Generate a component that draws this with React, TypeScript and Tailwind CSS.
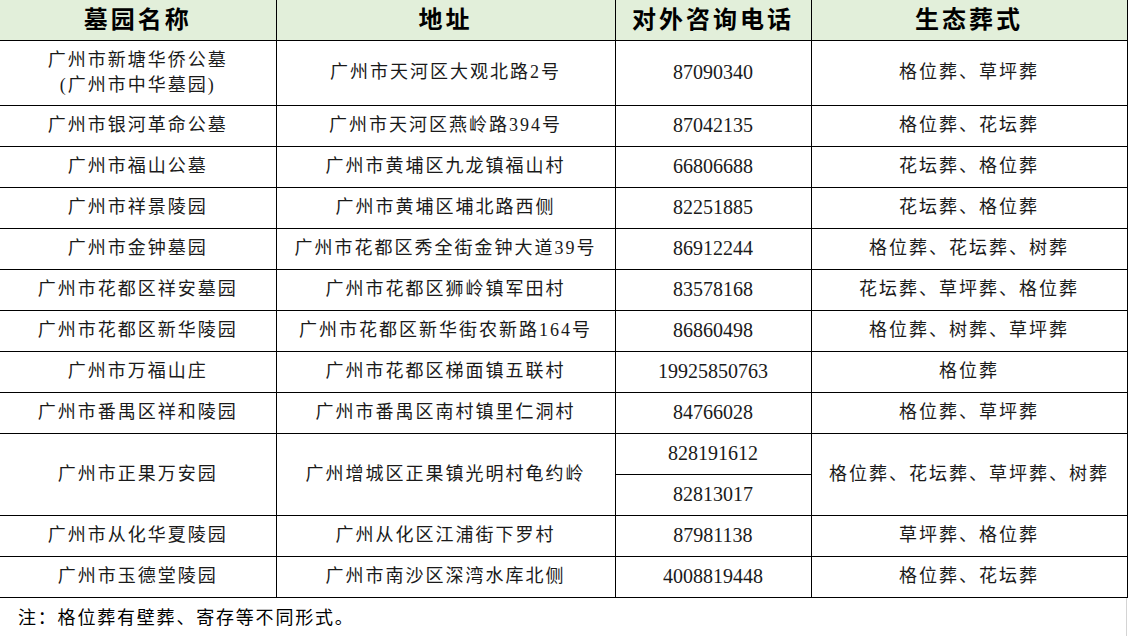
import React from "react";

type Row = { name: string[]; addr: string; phone: string; type: string; h: string };

const rows: Row[] = [
  { name: ["广州市新塘华侨公墓", "(广州市中华墓园)"], addr: "广州市天河区大观北路2号", phone: "87090340", type: "格位葬、草坪葬", h: "h-[65px]" },
  { name: ["广州市银河革命公墓"], addr: "广州市天河区燕岭路394号", phone: "87042135", type: "格位葬、花坛葬", h: "h-[41px]" },
  { name: ["广州市福山公墓"], addr: "广州市黄埔区九龙镇福山村", phone: "66806688", type: "花坛葬、格位葬", h: "h-[41px]" },
  { name: ["广州市祥景陵园"], addr: "广州市黄埔区埔北路西侧", phone: "82251885", type: "花坛葬、格位葬", h: "h-[41px]" },
  { name: ["广州市金钟墓园"], addr: "广州市花都区秀全街金钟大道39号", phone: "86912244", type: "格位葬、花坛葬、树葬", h: "h-[41px]" },
  { name: ["广州市花都区祥安墓园"], addr: "广州市花都区狮岭镇军田村", phone: "83578168", type: "花坛葬、草坪葬、格位葬", h: "h-[41px]" },
  { name: ["广州市花都区新华陵园"], addr: "广州市花都区新华街农新路164号", phone: "86860498", type: "格位葬、树葬、草坪葬", h: "h-[41px]" },
  { name: ["广州市万福山庄"], addr: "广州市花都区梯面镇五联村", phone: "19925850763", type: "格位葬", h: "h-[41px]" },
  { name: ["广州市番禺区祥和陵园"], addr: "广州市番禺区南村镇里仁洞村", phone: "84766028", type: "格位葬、草坪葬", h: "h-[41px]" },
];

const rowsAfter: Row[] = [
  { name: ["广州市从化华夏陵园"], addr: "广州从化区江浦街下罗村", phone: "87981138", type: "草坪葬、格位葬", h: "h-[41px]" },
  { name: ["广州市玉德堂陵园"], addr: "广州市南沙区深湾水库北侧", phone: "4008819448", type: "格位葬、花坛葬", h: "h-[41px]" },
];

const cell = "border border-black p-0 text-center align-middle";
const cjk = "text-[18px] tracking-[2px] leading-[25px]";
const num = "text-[20px] leading-[25px]";

function BodyRow({ r }: { r: Row }) {
  return (
    <tr className={r.h}>
      <td className={`${cell} border-l-0 ${cjk}`}>
        {r.name.map((n, i) => (
          <div key={i}>{n}</div>
        ))}
      </td>
      <td className={`${cell} ${cjk}`}>{r.addr}</td>
      <td className={`${cell} ${num}`}>{r.phone}</td>
      <td className={`${cell} ${cjk}`}>{r.type}</td>
    </tr>
  );
}

export default function App() {
  return (
    <div className="w-[1130px] h-[636px] bg-white overflow-hidden font-['Liberation_Serif','Noto_Sans_CJK_SC',serif] text-[#1a1a1a]">
      <table className="table-fixed border-collapse w-[1127px]">
        <colgroup>
          <col className="w-[276px]" />
          <col className="w-[339px]" />
          <col className="w-[196px]" />
          <col className="w-[316px]" />
        </colgroup>
        <thead>
          <tr className="h-[40px] bg-[#e2efda]">
            {["墓园名称", "地址", "对外咨询电话", "生态葬式"].map((t, i) => (
              <th
                key={t}
                className={`${cell} ${i === 0 ? "border-l-0" : ""} border-t-0 text-[24px] font-bold tracking-[3px] leading-[30px] text-black`}
              >
                {t}
              </th>
            ))}
          </tr>
        </thead>
        <tbody>
          {rows.map((r, i) => (
            <BodyRow key={i} r={r} />
          ))}
          <tr className="h-[41px]">
            <td rowSpan={2} className={`${cell} border-l-0 ${cjk}`}>广州市正果万安园</td>
            <td rowSpan={2} className={`${cell} ${cjk}`}>广州增城区正果镇光明村龟约岭</td>
            <td className={`${cell} ${num}`}>828191612</td>
            <td rowSpan={2} className={`${cell} ${cjk}`}>格位葬、花坛葬、草坪葬、树葬</td>
          </tr>
          <tr className="h-[41px]">
            <td className={`${cell} ${num}`}>82813017</td>
          </tr>
          {rowsAfter.map((r, i) => (
            <BodyRow key={i} r={r} />
          ))}
        </tbody>
      </table>
      <div className="flex w-[1127px] h-[39px] border-r border-[#d4d4d4]">
        <div className="pl-[18px] pt-[8px] text-[18px] tracking-[1.8px] leading-[25px] text-black">
          注：格位葬有壁葬、寄存等不同形式。
        </div>
      </div>
    </div>
  );
}
